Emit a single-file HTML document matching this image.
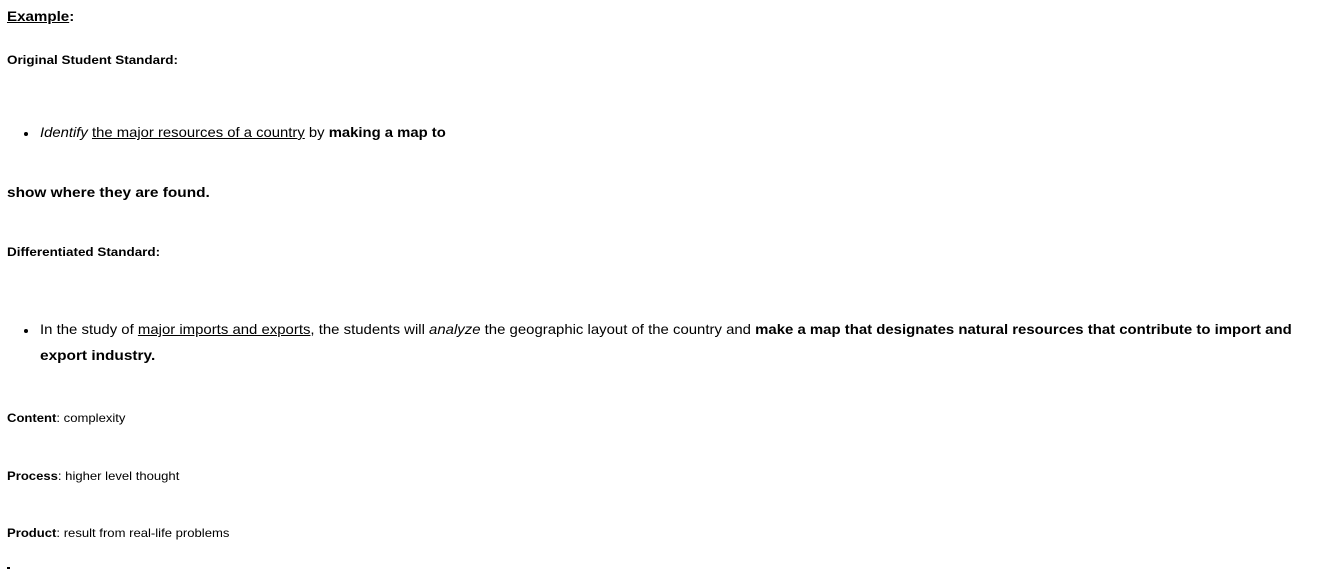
<!DOCTYPE html>
<html><head><meta charset="utf-8"><style>
body{margin:0;width:1332px;height:570px;background:#fff;color:#000;font-family:"Liberation Sans","DejaVu Sans",sans-serif;position:relative;overflow:hidden}
.l{position:absolute;white-space:nowrap;line-height:18px;transform-origin:0 50%}
.s12{font-size:12px}.s14{font-size:14px}
u{text-decoration:underline}
.b{position:absolute;width:4px;height:4px;background:#000;border-radius:50%}
</style></head><body>
<div class="l s14" style="left:7px;top:7px;font-weight:bold;transform:scaleX(1.08)"><u>Example</u>:</div>
<div class="l s12" style="left:7px;top:51px;font-weight:bold;transform:scaleX(1.12)">Original Student Standard:</div>
<div class="b" style="left:24px;top:132px"></div>
<div class="l s14" style="left:40px;top:123px;transform:scaleX(1.06)"><i>Identify</i> <u>the major resources of a country</u> by <b>making a map to</b></div>
<div class="l s14" style="left:7px;top:183px;font-weight:bold;transform:scaleX(1.1)">show where they are found.</div>
<div class="l s12" style="left:7px;top:243px;font-weight:bold;transform:scaleX(1.12)">Differentiated Standard:</div>
<div class="b" style="left:24px;top:329px"></div>
<div class="l s14" style="left:40px;top:320px;transform:scaleX(1.066)">In the study of <u>major imports and exports</u>, the students will <i>analyze</i> the geographic layout of the country and <b>make a map that designates natural resources that contribute to import and</b></div>
<div class="l s14" style="left:40px;top:346px;font-weight:bold;transform:scaleX(1.1)">export industry.</div>
<div class="l s12" style="left:7px;top:409px;transform:scaleX(1.09)"><b>Content</b>: complexity</div>
<div class="l s12" style="left:7px;top:467px;transform:scaleX(1.09)"><b>Process</b>: higher level thought</div>
<div class="l s12" style="left:7px;top:524px;transform:scaleX(1.09)"><b>Product</b>: result from real-life problems</div>
<div style="position:absolute;left:7px;top:567px;width:3px;height:2px;background:#000"></div>
</body></html>
